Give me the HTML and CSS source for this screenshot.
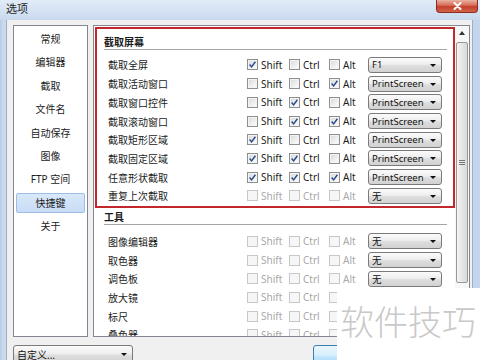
FILE: index.html
```html
<!DOCTYPE html>
<html lang="zh-CN">
<head>
<meta charset="utf-8">
<title>选项</title>
<link rel="stylesheet" href="styles.css">
</head>
<body>
<div class="window">
  <div class="titlebar">
    <span class="title">选项</span>
    <span class="close"><svg width="9" height="8" viewBox="0 0 9 8"><path d="M1.5 1 L7.5 7 M7.5 1 L1.5 7" stroke="#fff" stroke-width="2" stroke-linecap="round"/></svg></span>
  </div>
  <div class="client">
    <div class="main">
      <div class="nav">
        <div class="nav-item">常规</div>
        <div class="nav-item">编辑器</div>
        <div class="nav-item">截取</div>
        <div class="nav-item">文件名</div>
        <div class="nav-item">自动保存</div>
        <div class="nav-item">图像</div>
        <div class="nav-item">FTP 空间</div>
        <div class="nav-item active">快捷键</div>
        <div class="nav-item">关于</div>
      </div>
      <div class="panel">
        <div class="content">
          <div class="section marked">
            <div class="heading">截取屏幕</div>
            <div class="rows">
              <div class="row"><span class="label">截取全屏</span>
                <span class="key k-shift"><span class="cb on"><svg viewBox="0 0 9 9"><path d="M1.6 4.6 L3.6 6.9 L7.4 1.8"/></svg></span>Shift</span>
                <span class="key k-ctrl"><span class="cb"></span>Ctrl</span>
                <span class="key k-alt"><span class="cb"></span>Alt</span>
                <span class="combo">F1<i class="arrow"></i></span></div>
              <div class="row"><span class="label">截取活动窗口</span>
                <span class="key k-shift"><span class="cb"></span>Shift</span>
                <span class="key k-ctrl"><span class="cb"></span>Ctrl</span>
                <span class="key k-alt"><span class="cb on"><svg viewBox="0 0 9 9"><path d="M1.6 4.6 L3.6 6.9 L7.4 1.8"/></svg></span>Alt</span>
                <span class="combo">PrintScreen<i class="arrow"></i></span></div>
              <div class="row"><span class="label">截取窗口控件</span>
                <span class="key k-shift"><span class="cb"></span>Shift</span>
                <span class="key k-ctrl"><span class="cb on"><svg viewBox="0 0 9 9"><path d="M1.6 4.6 L3.6 6.9 L7.4 1.8"/></svg></span>Ctrl</span>
                <span class="key k-alt"><span class="cb"></span>Alt</span>
                <span class="combo">PrintScreen<i class="arrow"></i></span></div>
              <div class="row"><span class="label">截取滚动窗口</span>
                <span class="key k-shift"><span class="cb"></span>Shift</span>
                <span class="key k-ctrl"><span class="cb on"><svg viewBox="0 0 9 9"><path d="M1.6 4.6 L3.6 6.9 L7.4 1.8"/></svg></span>Ctrl</span>
                <span class="key k-alt"><span class="cb on"><svg viewBox="0 0 9 9"><path d="M1.6 4.6 L3.6 6.9 L7.4 1.8"/></svg></span>Alt</span>
                <span class="combo">PrintScreen<i class="arrow"></i></span></div>
              <div class="row"><span class="label">截取矩形区域</span>
                <span class="key k-shift"><span class="cb on"><svg viewBox="0 0 9 9"><path d="M1.6 4.6 L3.6 6.9 L7.4 1.8"/></svg></span>Shift</span>
                <span class="key k-ctrl"><span class="cb"></span>Ctrl</span>
                <span class="key k-alt"><span class="cb"></span>Alt</span>
                <span class="combo">PrintScreen<i class="arrow"></i></span></div>
              <div class="row"><span class="label">截取固定区域</span>
                <span class="key k-shift"><span class="cb on"><svg viewBox="0 0 9 9"><path d="M1.6 4.6 L3.6 6.9 L7.4 1.8"/></svg></span>Shift</span>
                <span class="key k-ctrl"><span class="cb on"><svg viewBox="0 0 9 9"><path d="M1.6 4.6 L3.6 6.9 L7.4 1.8"/></svg></span>Ctrl</span>
                <span class="key k-alt"><span class="cb"></span>Alt</span>
                <span class="combo">PrintScreen<i class="arrow"></i></span></div>
              <div class="row"><span class="label">任意形状截取</span>
                <span class="key k-shift"><span class="cb on"><svg viewBox="0 0 9 9"><path d="M1.6 4.6 L3.6 6.9 L7.4 1.8"/></svg></span>Shift</span>
                <span class="key k-ctrl"><span class="cb on"><svg viewBox="0 0 9 9"><path d="M1.6 4.6 L3.6 6.9 L7.4 1.8"/></svg></span>Ctrl</span>
                <span class="key k-alt"><span class="cb on"><svg viewBox="0 0 9 9"><path d="M1.6 4.6 L3.6 6.9 L7.4 1.8"/></svg></span>Alt</span>
                <span class="combo">PrintScreen<i class="arrow"></i></span></div>
              <div class="row disabled"><span class="label">重复上次截取</span>
                <span class="key k-shift"><span class="cb"></span>Shift</span>
                <span class="key k-ctrl"><span class="cb"></span>Ctrl</span>
                <span class="key k-alt"><span class="cb"></span>Alt</span>
                <span class="combo">无<i class="arrow"></i></span></div>
            </div>
          </div>
          <div class="section tools">
            <div class="heading">工具</div>
            <div class="rows">
              <div class="row disabled"><span class="label">图像编辑器</span>
                <span class="key k-shift"><span class="cb"></span>Shift</span>
                <span class="key k-ctrl"><span class="cb"></span>Ctrl</span>
                <span class="key k-alt"><span class="cb"></span>Alt</span>
                <span class="combo">无<i class="arrow"></i></span></div>
              <div class="row disabled"><span class="label">取色器</span>
                <span class="key k-shift"><span class="cb"></span>Shift</span>
                <span class="key k-ctrl"><span class="cb"></span>Ctrl</span>
                <span class="key k-alt"><span class="cb"></span>Alt</span>
                <span class="combo">无<i class="arrow"></i></span></div>
              <div class="row disabled"><span class="label">调色板</span>
                <span class="key k-shift"><span class="cb"></span>Shift</span>
                <span class="key k-ctrl"><span class="cb"></span>Ctrl</span>
                <span class="key k-alt"><span class="cb"></span>Alt</span>
                <span class="combo">无<i class="arrow"></i></span></div>
              <div class="row disabled"><span class="label">放大镜</span>
                <span class="key k-shift"><span class="cb"></span>Shift</span>
                <span class="key k-ctrl"><span class="cb"></span>Ctrl</span>
                <span class="key k-alt"><span class="cb"></span>Alt</span>
                <span class="combo">无<i class="arrow"></i></span></div>
              <div class="row disabled"><span class="label">标尺</span>
                <span class="key k-shift"><span class="cb"></span>Shift</span>
                <span class="key k-ctrl"><span class="cb"></span>Ctrl</span>
                <span class="key k-alt"><span class="cb"></span>Alt</span>
                <span class="combo">无<i class="arrow"></i></span></div>
              <div class="row disabled"><span class="label">叠色器</span>
                <span class="key k-shift"><span class="cb"></span>Shift</span>
                <span class="key k-ctrl"><span class="cb"></span>Ctrl</span>
                <span class="key k-alt"><span class="cb"></span>Alt</span>
                <span class="combo">无<i class="arrow"></i></span></div>
            </div>
          </div>
        </div>
        <div class="scrollbar">
          <div class="sb-up"><i class="up"></i></div>
          <div class="sb-thumb"><span class="grip"></span></div>
        </div>
      </div>
    </div>
    <div class="bottom">
      <span class="combo wide">自定义...<i class="arrow"></i></span>
      <span class="btn">确定</span>
      <span class="btn plain">取消</span>
    </div>
  </div>
</div>
<div class="watermark">软件技巧</div>
</body>
</html>
```

FILE: styles.css
```css
* { box-sizing: border-box; }
html, body { margin: 0; padding: 0; }
body {
  width: 480px;
  height: 360px;
  overflow: hidden;
  position: relative;
  font-family: "Noto Sans", "Noto Sans CJK SC", sans-serif;
  font-size: 10px;
  color: #1b1b1b;
  background: #fff;
}

.window {
  height: 360px;
  display: flex;
  flex-direction: column;
  background: linear-gradient(90deg, #b7cbe3, #c9daee 3px, #c4d6ec);
}

.titlebar {
  height: 20px;
  flex: none;
  display: flex;
  align-items: flex-start;
  background: linear-gradient(#e2ecf8, #d3e1f2 60%, #c8d9ee);
}
.title {
  margin: 2px 0 0 6px;
  font-size: 11px;
  line-height: 14px;
  color: #1e1e1e;
}
.close {
  margin-left: auto;
  margin-right: 2px;
  width: 42px;
  height: 13px;
  border: 1px solid #8a2d20;
  border-top: 0;
  border-radius: 0 0 4px 4px;
  background: linear-gradient(#eab3a4, #d66a52 45%, #c4402c 55%, #d2644a);
  display: flex;
  align-items: center;
  justify-content: center;
}
.close svg { display: block; }

.client {
  flex: 1;
  display: flex;
  flex-direction: column;
  margin: 0 7px 0 6px;
  background: #f0f0f0;
  border-left: 1px solid #9bb0c8;
  border-right: 1px solid #9bb0c8;
  min-height: 0;
}

.main {
  height: 317px;
  flex: none;
  display: flex;
  gap: 5px;
  padding: 5px 2px 0 6px;
}

.nav {
  width: 75px;
  flex: none;
  background: #fff;
  border: 1px solid #828790;
  display: flex;
  flex-direction: column;
  gap: 3.4px;
  padding: 3px 2px 0;
}
.nav-item {
  height: 20px;
  line-height: 18px;
  text-align: center;
  border: 1px solid transparent;
  border-radius: 2px;
  color: #1b1b1b;
}
.nav-item.active {
  background: linear-gradient(#d9e8f9, #c8dcf5);
  border-color: #9ebde4;
}

.panel {
  flex: 1;
  background: #fff;
  border: 1px solid #828790;
  display: flex;
  overflow: hidden;
}
.content { flex: 1; min-width: 0; }

.section {
  margin: 1px 0 0 1px;
  border: 2px solid transparent;
  padding-bottom: 0.75px;
}
.section.marked { border-color: #c1272d; }
.section.tools { margin-top: 0; padding-bottom: 0; }

.heading {
  margin: 6px 6px 0 7px;
  line-height: 14px;
  font-weight: bold;
  border-bottom: 1px solid #a5a5a5;
}
.tools .heading { margin-top: 0; }

.rows { padding-top: 5.65px; }
.tools .rows { padding-top: 7.2px; }

.row {
  display: flex;
  align-items: center;
  height: 18.7px;
  padding-left: 11px;
  white-space: nowrap;
}
.label { width: 139px; flex: none; }
.key {
  display: flex;
  align-items: center;
  gap: 3px;
  flex: none;
}
.k-shift { width: 42px; }
.k-ctrl { width: 40px; }
.k-alt { width: 39px; }

.cb {
  width: 11px;
  height: 11px;
  flex: none;
  border: 1px solid #8e8f8f;
  background: linear-gradient(135deg, #d8d8d8, #f4f4f4 70%, #fdfdfd);
  box-shadow: inset 0 0 0 1px #f4f4f4;
  display: flex;
  align-items: center;
  justify-content: center;
}
.cb svg { width: 9px; height: 9px; display: block; }
.cb svg path { fill: none; stroke: #2b4c8c; stroke-width: 1.5; }

.row.disabled .key { color: #a8a8a8; }
.row.disabled .cb {
  border-color: #c7c7c7;
  background: #f6f6f6;
  box-shadow: none;
}

.combo {
  width: 74px;
  height: 16px;
  flex: none;
  display: flex;
  align-items: center;
  padding-left: 3px;
  border: 1px solid #7a7a7a;
  border-radius: 3px;
  background: linear-gradient(#fbfbfb, #eeeeee 45%, #dddddd 55%, #d2d2d2);
  position: relative;
  color: #111;
  font-size: 9.5px;
}
.arrow {
  position: absolute;
  right: 5px;
  top: 6px;
  width: 0;
  height: 0;
  border-left: 3px solid transparent;
  border-right: 3px solid transparent;
  border-top: 3.5px solid #111;
}

.scrollbar {
  width: 14px;
  flex: none;
  display: flex;
  flex-direction: column;
  align-items: center;
  background: #f7f7f7;
}
.sb-up {
  height: 14px;
  width: 14px;
  display: flex;
  align-items: center;
  justify-content: center;
}
.up {
  width: 0;
  height: 0;
  border-left: 3.5px solid transparent;
  border-right: 3.5px solid transparent;
  border-bottom: 4px solid #333;
}
.sb-thumb {
  width: 12px;
  height: 241px;
  margin-top: 2px;
  border: 1px solid #989898;
  border-radius: 2px;
  background: linear-gradient(90deg, #f4f4f4, #e6e6e6 50%, #d9d9d9);
  display: flex;
  align-items: center;
  justify-content: center;
}
.grip {
  width: 6px;
  height: 5px;
  background: repeating-linear-gradient(#777 0 1px, transparent 1px 2px);
}

.bottom {
  flex: 1;
  display: flex;
  align-items: flex-start;
  padding: 8px 0 0 6px;
}
.combo.wide {
  width: 120px;
  height: 19px;
  font-size: 10px;
}
.combo.wide .arrow { top: 7px; }
.btn {
  margin-left: 180px;
  width: 75px;
  height: 22px;
  border: 1px solid #3c7fb1;
  border-radius: 3px;
  background: linear-gradient(#eaf6fd, #d9f0fc 45%, #bee6fd 55%, #a7d9f5);
  text-align: center;
  line-height: 20px;
}
.btn.plain {
  margin-left: 6px;
  border-color: #707070;
  background: linear-gradient(#f2f2f2, #ebebeb 45%, #dddddd 55%, #cfcfcf);
}

.watermark {
  position: absolute;
  left: 337px;
  top: 288px;
  width: 143px;
  height: 72px;
  background: #fff;
  padding: 16px 0 0 3px;
  font-family: "Noto Sans CJK SC", sans-serif;
  font-weight: 300;
  font-size: 34px;
  line-height: 34px;
  color: #c9c9c9;
  white-space: nowrap;
}
```
